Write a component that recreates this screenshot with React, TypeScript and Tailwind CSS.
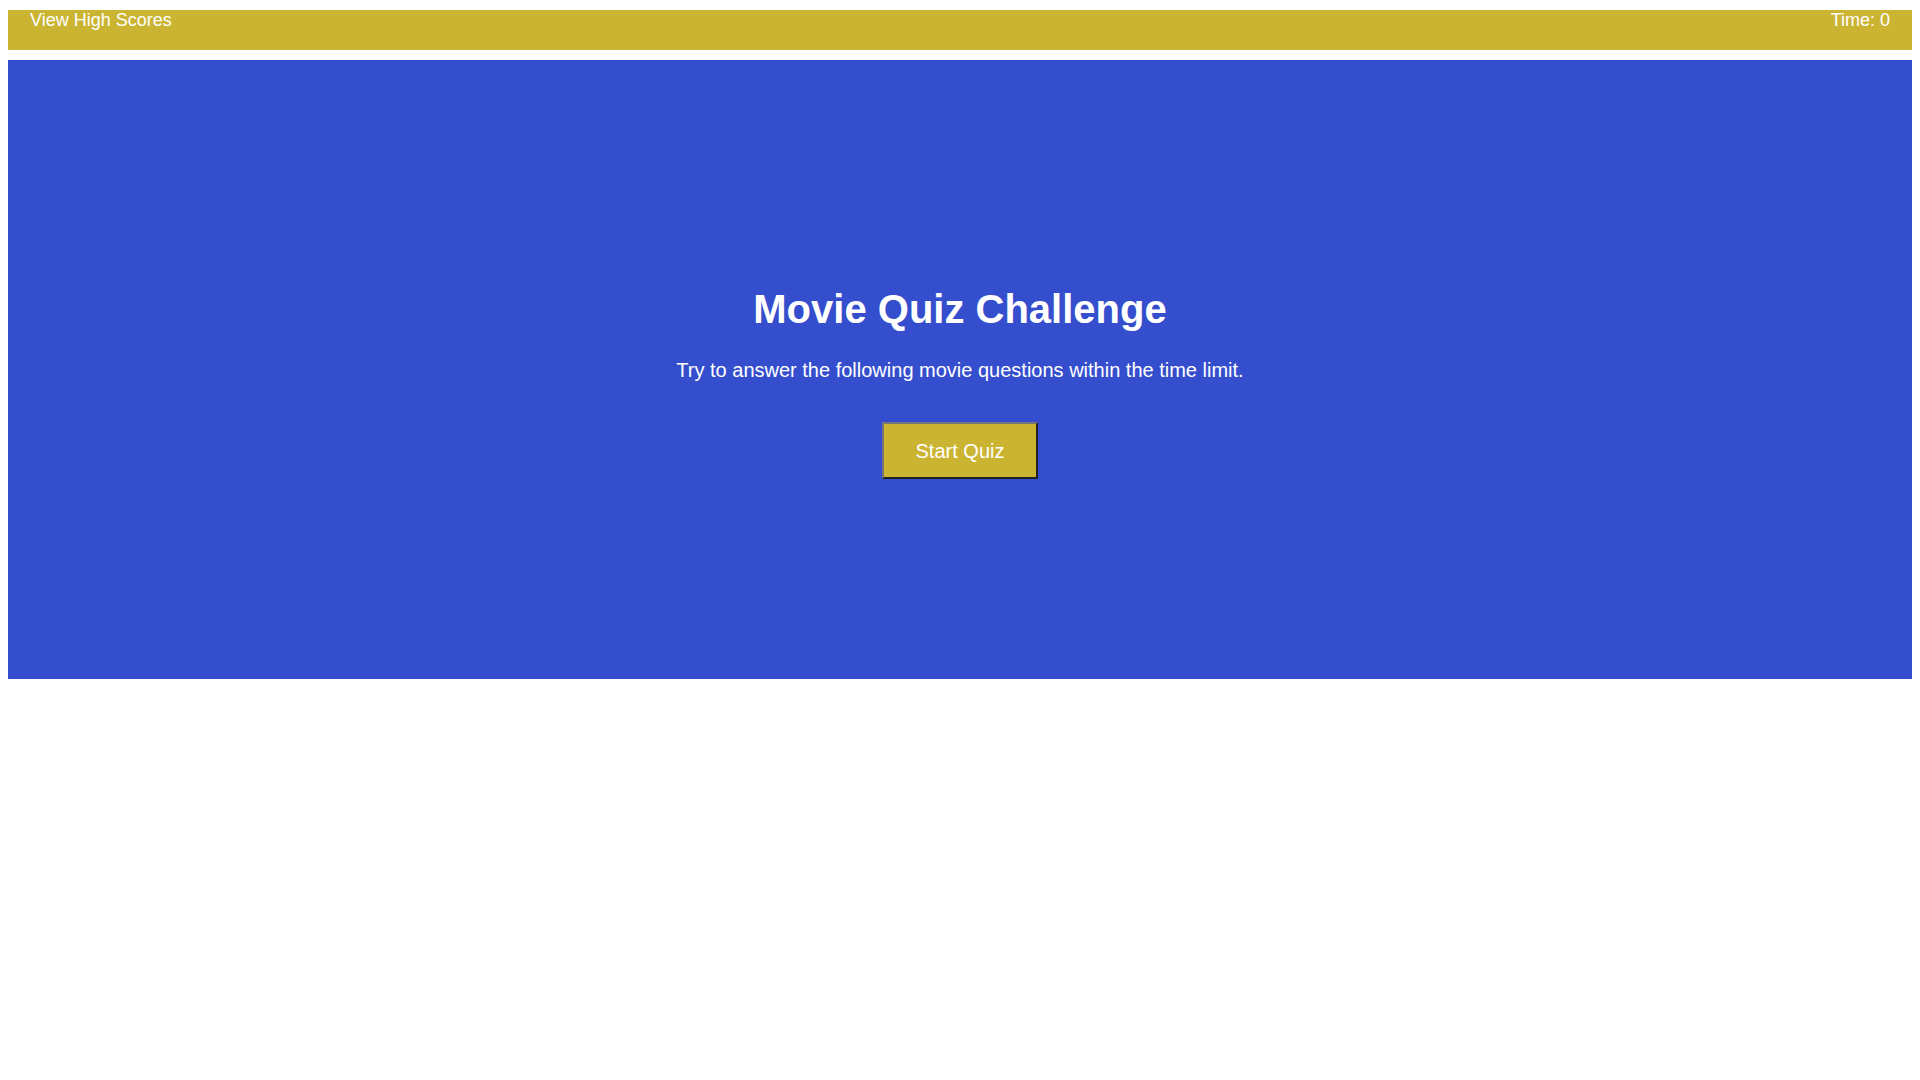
export default function App() {
  return (
    <div className="px-2 pt-[10px] font-['Liberation_Sans',Arial,sans-serif] text-white">
      {/* top bar */}
      <div className="h-[40px] bg-[#ccb433] flex justify-between px-[22px] text-[18px] leading-[20px]">
        <a className="cursor-pointer">View High Scores</a>
        <span>Time: 0</span>
      </div>

      {/* start screen */}
      <div className="mt-[10px] h-[619px] bg-[#354ecd] flex flex-col items-center pt-[226px]">
        <h1 className="text-[40px] font-bold leading-[46px]">Movie Quiz Challenge</h1>
        <p className="mt-[27px] text-[20px] leading-[23px]">
          Try to answer the following movie questions within the time limit.
        </p>
        <button className="mt-[40px] w-[156px] h-[57px] bg-[#ccb433] text-[20px] border-2 border-t-[#767676] border-l-[#767676] border-b-[#222] border-r-[#222]">
          Start Quiz
        </button>
      </div>
    </div>
  );
}
